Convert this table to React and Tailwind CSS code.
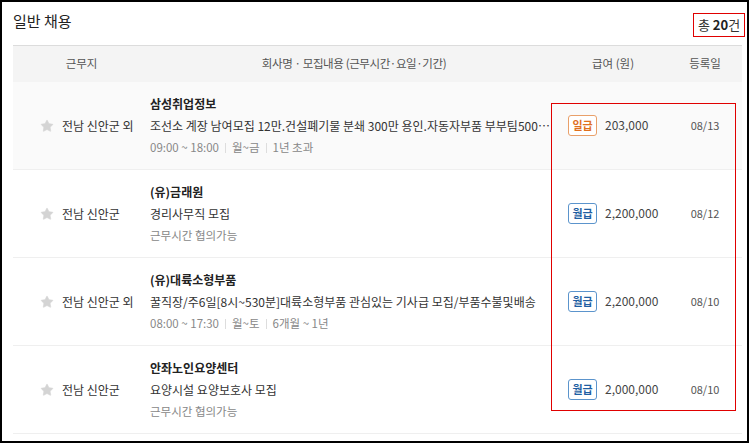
import { Star } from "lucide-react";

const jobs = [
  {
    loc: "전남 신안군 외",
    company: "삼성취업정보",
    desc: "조선소 계장 남여모집 12만.건설폐기물 분쇄 300만 용인.자동자부품 부부팀500만 출퇴근 가능",
    meta: ["09:00 ~ 18:00", "월~금", "1년 초과"],
    payType: "일급",
    pay: "203,000",
    date: "08/13",
    hover: true,
  },
  {
    loc: "전남 신안군",
    company: "(유)금래원",
    desc: "경리사무직 모집",
    meta: ["근무시간 협의가능"],
    payType: "월급",
    pay: "2,200,000",
    date: "08/12",
  },
  {
    loc: "전남 신안군 외",
    company: "(유)대륙소형부품",
    desc: "꿀직장/주6일[8시~530분]대륙소형부품 관심있는 기사급 모집/부품수불및배송",
    meta: ["08:00 ~ 17:30", "월~토", "6개월 ~ 1년"],
    payType: "월급",
    pay: "2,200,000",
    date: "08/10",
  },
  {
    loc: "전남 신안군",
    company: "안좌노인요양센터",
    desc: "요양시설 요양보호사 모집",
    meta: ["근무시간 협의가능"],
    payType: "월급",
    pay: "2,000,000",
    date: "08/10",
  },
];

const PayBadge = ({ type }) =>
  type === "일급" ? (
    <span className="flex h-[21px] w-[29px] shrink-0 items-center justify-center rounded-[3px] border border-[#e9a06a] bg-white text-[11px] font-bold text-[#e0701e]">
      {type}
    </span>
  ) : (
    <span className="flex h-[21px] w-[29px] shrink-0 items-center justify-center rounded-[3px] border border-[#5b94cc] bg-white text-[11px] font-bold text-[#1f5fa3]">
      {type}
    </span>
  );

const JobRow = ({ job }) => (
  <div
    className={`flex h-[88px] items-center border-b border-[#efefef] ${
      job.hover ? "bg-[#fafafa]" : "bg-white"
    }`}
  >
    {/* 근무지 */}
    <div className="flex w-[137px] items-center gap-[8px] pl-[27px] text-[12px] text-[#333]">
      <Star className="h-[14px] w-[14px] fill-[#d4d4d4] text-[#d4d4d4]" strokeWidth={1} />
      <span>{job.loc}</span>
    </div>

    {/* 회사명 · 모집내용 */}
    <div className="flex w-[408px] flex-col pr-[2px]">
      <div className="h-[22px] text-[12px] font-bold leading-[22px] text-[#222]">{job.company}</div>
      <div className="h-[22px] truncate text-[12px] leading-[22px] text-[#333]">{job.desc}</div>
      <div className="flex h-[22px] items-center text-[11.5px] text-[#888]">
        {job.meta.map((m, i) => (
          <span key={i} className="flex items-center">
            {i > 0 && <span className="mx-[6px] h-[10px] w-px bg-[#ddd]" />}
            {m}
          </span>
        ))}
      </div>
    </div>

    {/* 급여 */}
    <div className="flex w-[110px] items-center gap-[8px] pl-[10px]">
      <PayBadge type={job.payType} />
      <span className="-mt-[2px] whitespace-nowrap text-[12px] text-[#444]">{job.pay}</span>
    </div>

    {/* 등록일 */}
    <div className="flex-1 text-center text-[11px] text-[#555]">{job.date}</div>
  </div>
);

export default function App() {
  return (
    <div
      className="relative h-[443px] w-[749px] border-2 border-black bg-white pl-[11px] pr-[5px]"
      style={{ fontFamily: '"Noto Sans CJK KR", "Noto Sans", sans-serif' }}
    >
      {/* Title */}
      <div className="flex h-[43px] items-start justify-between">
        <h2 className="mt-[8px] text-[15px] leading-[22px] text-[#222]">일반 채용</h2>
        <div className="-mr-[3px] mt-[11px] flex h-[24px] w-[52px] items-center justify-center border border-[#e00000] text-[13px] text-[#333]">
          총&nbsp;<b className="text-[#222]">20</b>건
        </div>
      </div>

      {/* Table header */}
      <div className="flex h-[37px] items-center border-t border-[#dcdcdc] bg-[#f4f4f4] text-[11.5px] text-[#555]">
        <div className="w-[137px] text-center">근무지</div>
        <div className="w-[408px] text-center tracking-[-0.4px]">회사명 · 모집내용 (근무시간·요일·기간)</div>
        <div className="w-[110px] text-center">급여 (원)</div>
        <div className="flex-1 text-center">등록일</div>
      </div>

      {/* Rows */}
      {jobs.map((job, i) => (
        <JobRow key={i} job={job} />
      ))}

      {/* Annotation box over salary column */}
      <div className="pointer-events-none absolute left-[549px] top-[101px] h-[308px] w-[185px] border border-[#e00000]" />
    </div>
  );
}
